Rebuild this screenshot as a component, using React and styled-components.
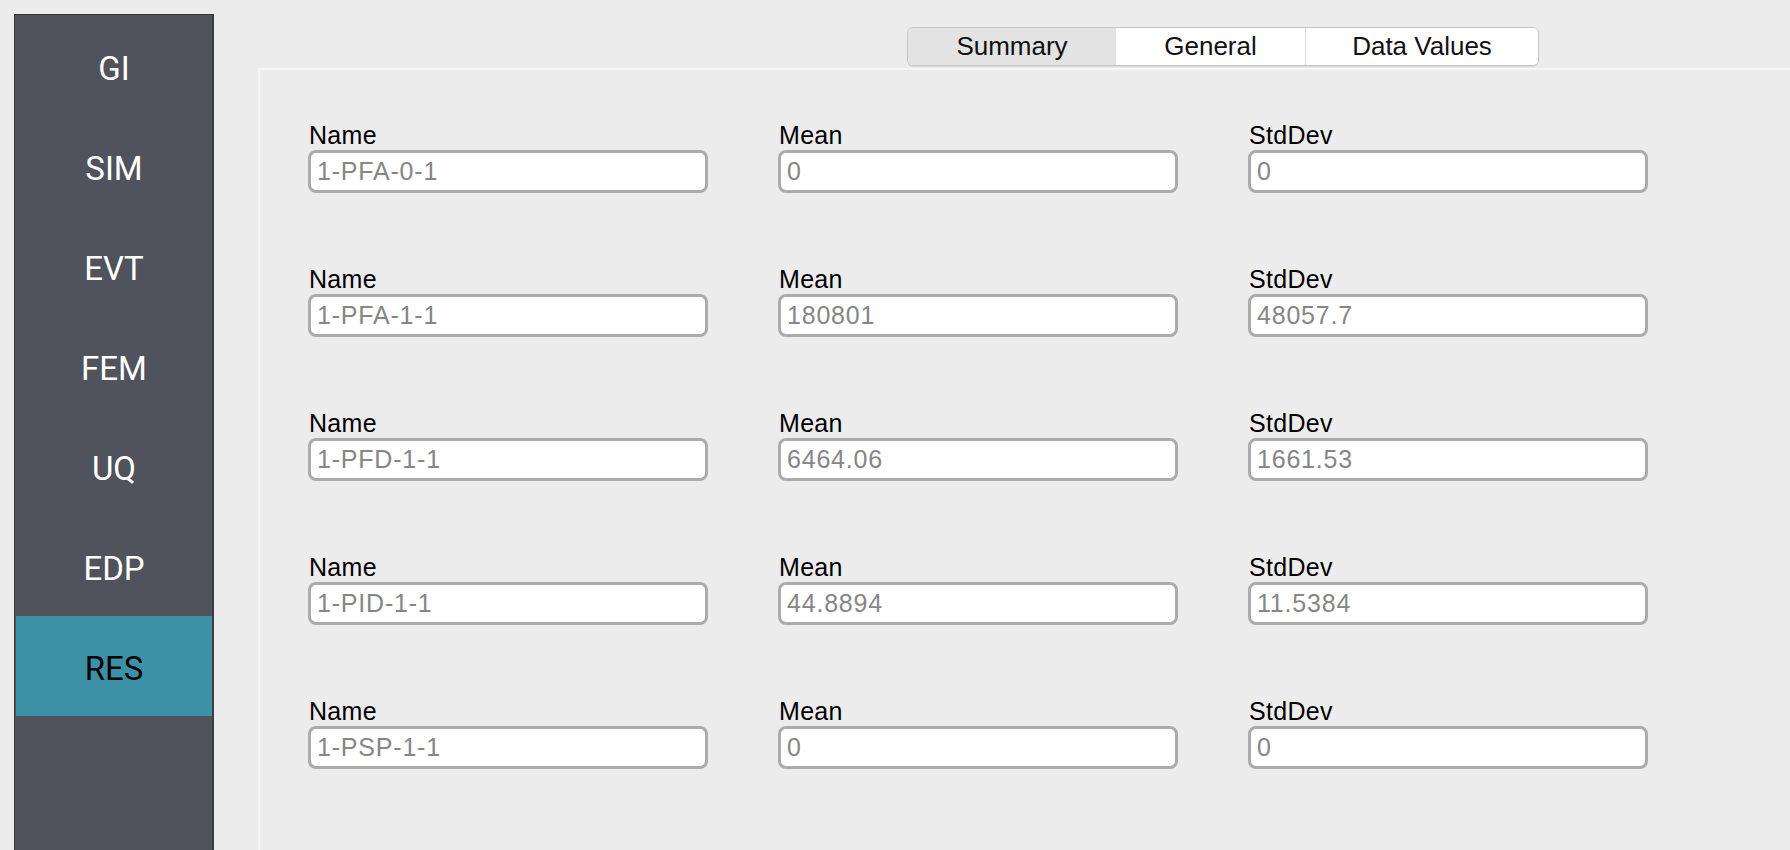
import React from "react";
import styled, { createGlobalStyle } from "styled-components";

const GlobalStyle = createGlobalStyle`
  html, body {
    margin: 0;
    padding: 0;
    background: #ececec;
    overflow: hidden;
  }
  body {
    font-family: "Liberation Sans", Arial, sans-serif;
  }
`;

const navItems = ["GI", "SIM", "EVT", "FEM", "UQ", "EDP", "RES"];
const tabs = [
  { label: "Summary", width: 208 },
  { label: "General", width: 189 },
  { label: "Data Values", width: 233 },
];
const results = [
  { name: "1-PFA-0-1", mean: "0", std: "0" },
  { name: "1-PFA-1-1", mean: "180801", std: "48057.7" },
  { name: "1-PFD-1-1", mean: "6464.06", std: "1661.53" },
  { name: "1-PID-1-1", mean: "44.8894", std: "11.5384" },
  { name: "1-PSP-1-1", mean: "0", std: "0" },
];

const App = () => {
  return (
    <React.Fragment>
      <GlobalStyle />
      <Layout>
        <Sidebar>
          {navItems.map((item) => (
            <NavItem key={item} active={item === "RES"}>
              {item}
            </NavItem>
          ))}
        </Sidebar>
        <Main>
          <TabBar>
            {tabs.map((tab, i) => (
              <Tab key={tab.label} width={tab.width} selected={i === 0} divider={i === 2}>
                {tab.label}
              </Tab>
            ))}
          </TabBar>
          <Panel>
            <FieldGrid>
              {results.map((row) => (
                <React.Fragment key={row.name}>
                  <Field>
                    <Label>Name</Label>
                    <Input readOnly value={row.name} />
                  </Field>
                  <Field>
                    <Label>Mean</Label>
                    <Input readOnly value={row.mean} />
                  </Field>
                  <Field>
                    <Label>StdDev</Label>
                    <Input readOnly value={row.std} />
                  </Field>
                </React.Fragment>
              ))}
            </FieldGrid>
          </Panel>
        </Main>
      </Layout>
    </React.Fragment>
  );
};

const Layout = styled.div`
  display: flex;
  height: 100vh;
  box-sizing: border-box;
`;

const Sidebar = styled.nav`
  flex: 0 0 auto;
  width: 200px;
  margin: 14px 0 0 14px;
  height: calc(100vh - 14px);
  box-sizing: border-box;
  background: #50535b;
  border-top: 1px solid #34363b;
  border-left: 1px solid #34363b;
  border-right: 2px solid #3b3e44;
  padding: 1px 0 0 1px;
  display: flex;
  flex-direction: column;
`;

const NavItem = styled.div`
  height: 100px;
  box-sizing: border-box;
  padding-top: 4px;
  display: flex;
  align-items: center;
  justify-content: center;
  font-family: Roboto, "Liberation Sans", sans-serif;
  font-size: 33px;
  color: ${(p) => (p.active ? "#000" : "#fff")};
  background: ${(p) => (p.active ? "#3d91a7" : "transparent")};
`;

const Main = styled.div`
  flex: 1;
  display: flex;
  flex-direction: column;
  padding-left: 44px;
  min-width: 0;
`;

const TabBar = styled.div`
  display: flex;
  align-self: flex-start;
  margin: 27px 0 0 649px;
  height: 39px;
  box-sizing: border-box;
  border: 1px solid #c6c6c6;
  border-radius: 6px;
  background: #fff;
  overflow: hidden;
  box-shadow: 0 1px 1px rgba(0, 0, 0, 0.08);
`;

const Tab = styled.div`
  width: ${(p) => p.width}px;
  display: flex;
  align-items: center;
  justify-content: center;
  font-size: 26px;
  color: #111;
  background: ${(p) => (p.selected ? "#e3e3e3" : "#fff")};
  border-left: ${(p) => (p.divider ? "1px solid #dadada" : "none")};
  box-sizing: border-box;
`;

const Panel = styled.section`
  flex: 1;
  margin-top: 2px;
  border-top: 2px solid #f6f6f6;
  border-left: 2px solid #f6f6f6;
  padding: 51px 0 0 48px;
`;

const FieldGrid = styled.div`
  display: grid;
  grid-template-columns: repeat(3, 400px);
  column-gap: 70px;
  row-gap: 72px;
`;

const Field = styled.div`
  display: flex;
  flex-direction: column;
`;

const Label = styled.div`
  font-size: 25px;
  line-height: 28px;
  letter-spacing: 0.3px;
  color: #000;
  padding-left: 1px;
`;

const Input = styled.input`
  margin-top: 1px;
  height: 43px;
  box-sizing: border-box;
  border: 3px solid #ababab;
  border-radius: 8px;
  background: #fff;
  padding: 0 6px;
  font-family: "Liberation Sans", Arial, sans-serif;
  font-size: 25px;
  letter-spacing: 0.8px;
  color: #868686;
  outline: none;
`;

export default App;
